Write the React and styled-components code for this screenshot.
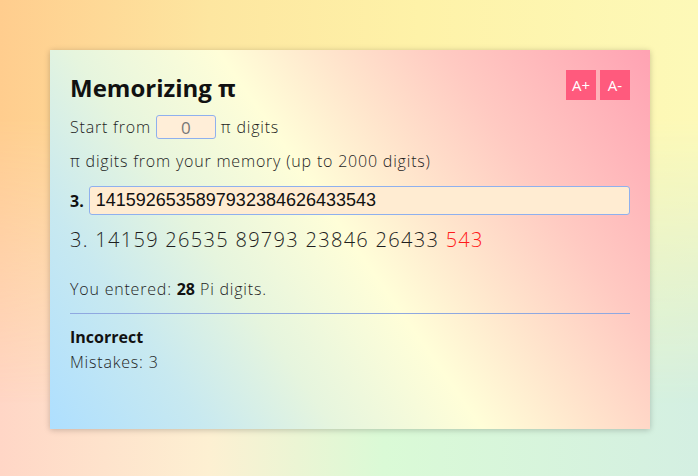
import { useEffect, useRef } from 'react';
import styled, { createGlobalStyle } from 'styled-components';

const Global = createGlobalStyle`
  html, body {
    margin: 0;
    padding: 0;
  }
  body {
    width: 698px;
    height: 476px;
    overflow: hidden;
    font-family: "Open Sans", "Lato", sans-serif;
  }
`;

const Page = styled.div`
  position: relative;
  width: 698px;
  height: 476px;
  padding: 50px 48px 47px 50px;
  box-sizing: border-box;
  background: linear-gradient(90deg, #ffd6c6 0%, #fdf0d2 30%, #dafad6 55%, #d4efe2 100%);

  &::before {
    content: '';
    position: absolute;
    inset: 0;
    background: linear-gradient(90deg, #ffcd8e 0%, #fde6a0 30%, #fef2a8 60%, #fdf9b8 100%);
    -webkit-mask-image: linear-gradient(180deg, #000 0%, #000 25%, transparent 85%);
    mask-image: linear-gradient(180deg, #000 0%, #000 25%, transparent 85%);
  }
`;

const Card = styled.div`
  position: relative;
  height: 100%;
  box-sizing: border-box;
  padding: 20px 20px;
  box-shadow: 0 1px 6px rgba(0, 0, 0, 0.22);
  color: #222;
  background: linear-gradient(
    55deg,
    #aedfff 0%,
    #c8e9f0 18%,
    #e6f5de 33%,
    #fffed8 50%,
    #ffe4cc 63%,
    #ffcac2 76%,
    #ffa2b3 100%
  );
  display: flex;
  flex-direction: column;
`;

const Header = styled.div`
  display: flex;
  justify-content: space-between;
  align-items: flex-start;
  height: 38px;
`;

const Title = styled.h1`
  margin: 3px 0 0;
  font-size: 24px;
  font-weight: 700;
  line-height: 30px;
  color: #111;
`;

const ButtonGroup = styled.div`
  display: flex;
  gap: 4px;
`;

const SizeButton = styled.button`
  width: 30px;
  height: 30px;
  border: none;
  padding: 0;
  background: #ff5a7d;
  color: #fff;
  font-family: "Open Sans", sans-serif;
  font-size: 15px;
  cursor: pointer;
`;

const Line = styled.div`
  display: flex;
  align-items: center;
  font-size: 16px;
  font-weight: 300;
  letter-spacing: 0.8px;
  color: #1e1e1e;
  white-space: pre;
  margin-top: ${(p) => p.$top || 0}px;
  height: ${(p) => p.$h || 24}px;
  gap: ${(p) => p.$gap || 0}px;
`;

const StartInput = styled.input`
  width: 60px;
  height: 24px;
  box-sizing: border-box;
  margin: 0 5px;
  border: 1px solid #8fb0ee;
  border-radius: 3px;
  background: #ffeed8;
  color: #777;
  text-align: center;
  font-family: "Open Sans", sans-serif;
  font-size: 17px;
  font-weight: 400;
  outline: none;
`;

const Strong = styled.b`
  font-weight: 700;
  color: #111;
  letter-spacing: 0;
  font-size: ${(p) => p.$size || 16}px;
`;

const DigitsInput = styled.input`
  flex: 1;
  height: 29px;
  box-sizing: border-box;
  border: 1px solid #8fb0ee;
  border-radius: 3px;
  background: #ffecd2;
  padding: 0 6px;
  font-family: "Liberation Sans", Arial, sans-serif;
  font-size: 18px;
  letter-spacing: 0;
  color: #111;
  caret-color: red;
  outline: none;
`;

const Digits = styled.div`
  margin-top: 12px;
  font-size: 20px;
  font-weight: 300;
  letter-spacing: 1.3px;
  color: #1e1e1e;
  line-height: 26px;
`;

const Wrong = styled.span`
  color: #ff1a1a;
`;

const Divider = styled.hr`
  border: none;
  border-top: 1px solid #8fa8e0;
  margin: 12px 0 0;
`;

const Status = styled.div`
  margin-top: 12px;
  font-size: 16px;
  font-weight: 700;
  color: #111;
`;

export default function App() {
  const inputRef = useRef(null);

  useEffect(() => {
    const el = inputRef.current;
    if (el) {
      el.focus();
      el.setSelectionRange(el.value.length, el.value.length);
    }
  }, []);

  return (
    <>
      <Global />
      <Page>
        <Card>
          <Header>
            <Title>Memorizing π</Title>
            <ButtonGroup>
              <SizeButton>A+</SizeButton>
              <SizeButton>A-</SizeButton>
            </ButtonGroup>
          </Header>
          <Line $top={7}>
            Start from
            <StartInput defaultValue="0" />
            π digits
          </Line>
          <Line $top={10}>π digits from your memory (up to 2000 digits)</Line>
          <Line $top={13} $h={29} $gap={5}>
            <Strong>3.</Strong>
            <DigitsInput ref={inputRef} defaultValue="1415926535897932384626433543" />
          </Line>
          <Digits>
            3. 14159 26535 89793 23846 26433 <Wrong>543</Wrong>
          </Digits>
          <Line $top={24}>
            You entered: <Strong>28</Strong> Pi digits.
          </Line>
          <Divider />
          <Status>Incorrect</Status>
          <Line $top={2}>Mistakes: 3</Line>
        </Card>
      </Page>
    </>
  );
}
